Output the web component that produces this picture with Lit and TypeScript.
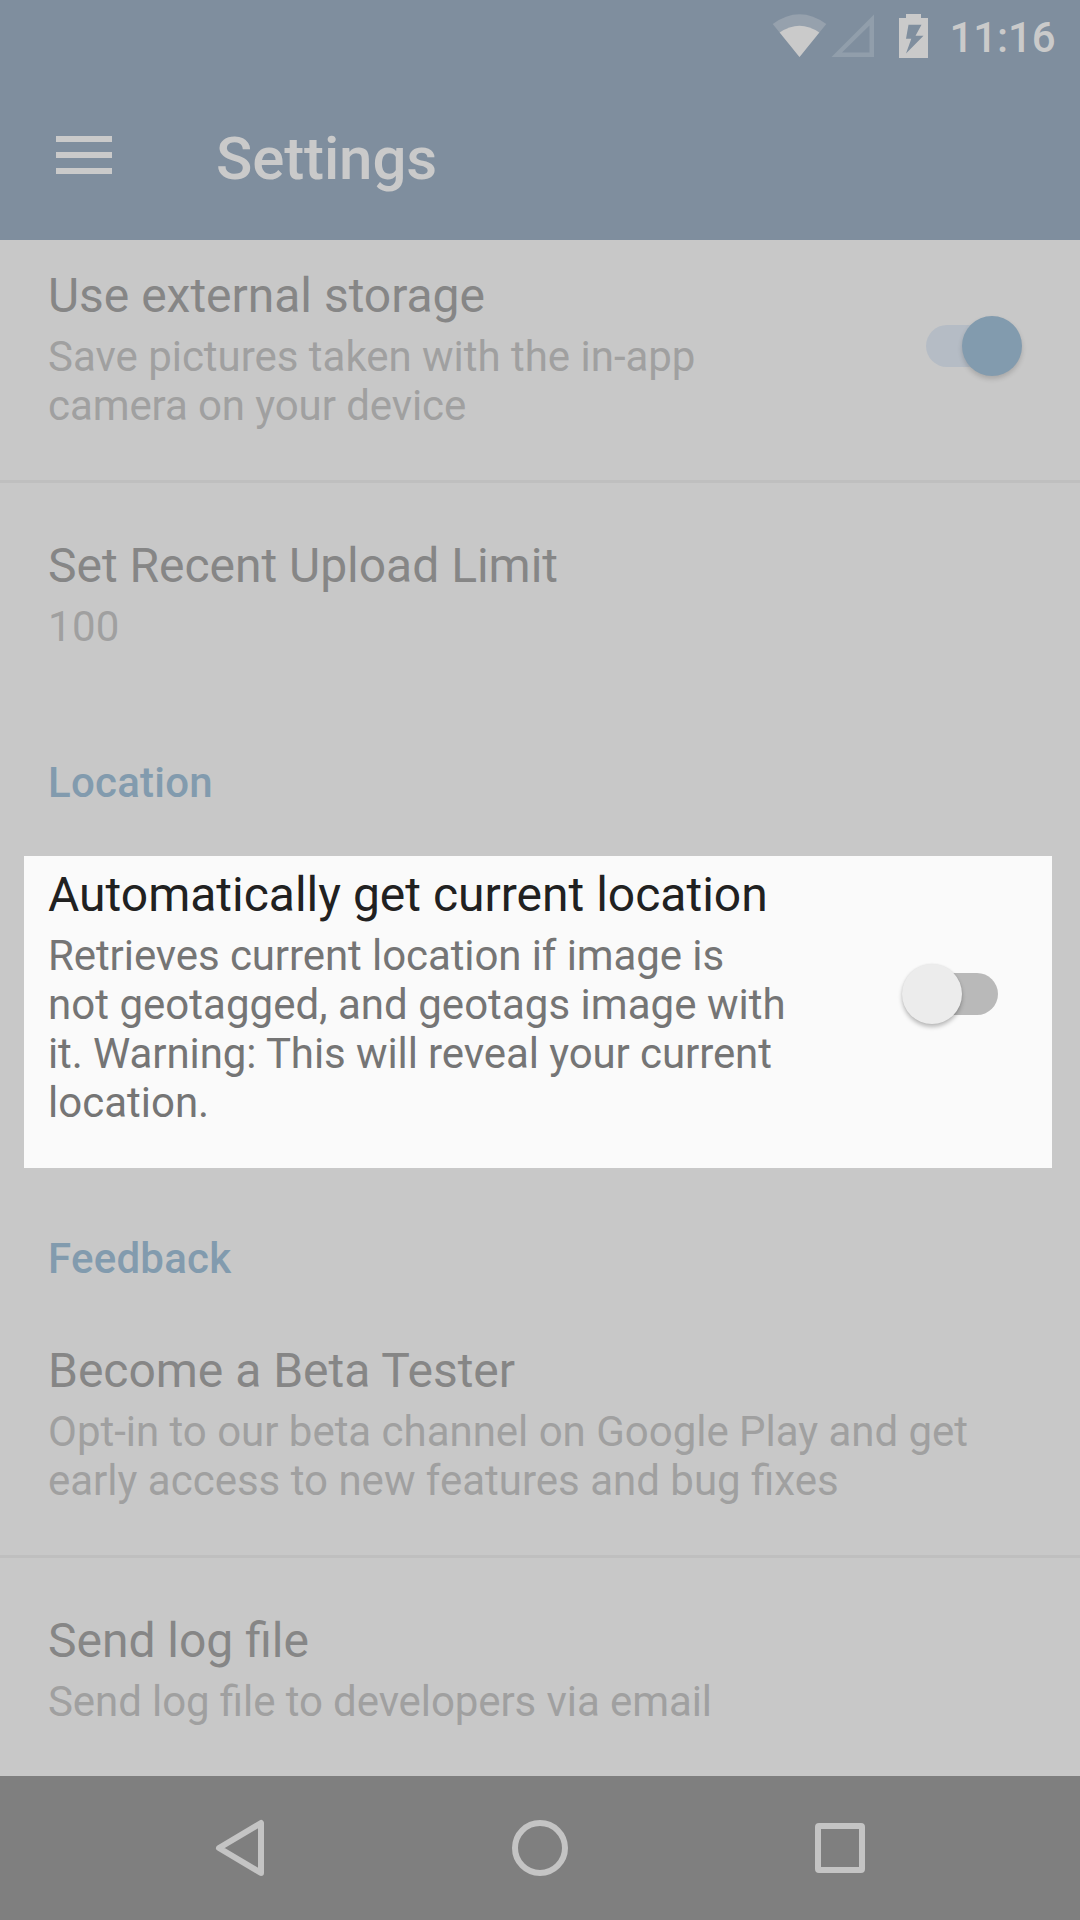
import { LitElement, html, css } from "lit";
import { customElement, property } from "lit/decorators.js";

@customElement("status-bar")
class StatusBar extends LitElement {
  static styles = css`
    :host { display: block; height: 72px; }
    .icons { display: block; width: 1080px; height: 72px; }
    .time { font: 500 42px Roboto, sans-serif; fill: #cacaca; }
  `;
  render() {
    return html`<svg class="icons" viewBox="0 0 1080 72">
      <path d="M799.5 57L772.7 24Q799.5 4.500 826.300 24Z" fill="#96a1ad" />
      <path d="M799.5 57L779.7 32.500Q799.500 19 819.300 32.500Z" fill="#cacaca" />
      <path fill-rule="evenodd" d="M874 14.500V57H831.500ZM869.500 25.500L842 52.500H869.500Z" fill="#919eab" />
      <path fill-rule="evenodd" d="M906 14H921V18H928V58H899V18H906ZM908.500 24.800L906 38.800H911.300L906 53.500L923.500 35.700H915.500L921.500 24.800Z" fill="#cacaca" />
      <text class="time" x="949.5" y="52" textLength="106">11:16</text>
    </svg>`;
  }
}

@customElement("toggle-switch")
class ToggleSwitch extends LitElement {
  @property({ type: Boolean, reflect: true }) on = false;
  static styles = css`
    :host { display: flex; align-items: center; width: 96px; height: 60px; }
    .track { display: flex; align-items: center; width: 84px; height: 42px; border-radius: 21px; background: #b9b9b9; margin-left: 12px; }
    .thumb { flex: none; width: 60px; height: 60px; border-radius: 50%; background: #ececec; margin-left: -12px; box-shadow: 0 3px 4px rgba(0,0,0,.25), 0 0 2px rgba(0,0,0,.08); }
    :host([on]) .track { margin: 0; justify-content: flex-end; background: #b5bcc5; }
    :host([on]) .thumb { margin: 0 -12px 0 0; background: #829bae; box-shadow: 0 3px 5px rgba(0,0,0,.16); }
  `;
  render() { return html`<div class="track"><div class="thumb"></div></div>`; }
}

@customElement("app-root")
class AppRoot extends LitElement {
  static styles = css`
    :host { display: block; width: 1080px; height: 1920px; overflow: hidden; background: #c8c8c8; font-family: Roboto, sans-serif; font-feature-settings: "liga" 1; }
    .page { display: flex; flex-direction: column; height: 1920px; }
    .header { height: 240px; background: #7f8e9e; flex: none; }
    .bar { display: flex; align-items: center; height: 168px; padding-left: 56px; gap: 104px; }
    .menu { width: 56px; height: 40px; fill: #cacaca; }
    .heading { font-size: 60px; font-weight: 500; color: #cacaca; line-height: 70px; padding-top: 6px; letter-spacing: -0.12px; }
    .list { flex: 1; }
    .item { box-sizing: border-box; padding: 26px 48px 0; color: #868686; }
    .title { font-size: 48px; line-height: 60px; white-space: nowrap; letter-spacing: -0.02px; }
    .desc { font-size: 42px; line-height: 49px; color: #a0a0a0; white-space: nowrap; margin-top: 6px; }
    .line { display: block; }
    .tight { letter-spacing: -0.09px; }
    .snug { letter-spacing: -0.02px; }
    .loose { letter-spacing: 0.03px; }
    .number { letter-spacing: 0.3px; }
    .external { display: flex; justify-content: space-between; height: 243px; border-bottom: 3px solid #bfbfbf; }
    .external toggle-switch { margin-top: 50px; margin-right: 10px; }
    .limit { height: 256px; padding-top: 53px; }
    .category { font-size: 42px; font-weight: 500; line-height: 50px; color: #829bae; padding-left: 48px; letter-spacing: 0.25px; }
    .location { height: 98px; padding-top: 19px; }
    .focus { display: flex; justify-content: space-between; height: 312px; margin: 0 28px 0 24px; padding: 9px 54px 0 24px; background: #fafafa; color: #212121; }
    .focus .title { letter-spacing: 0; }
    .focus .desc { color: #757575; }
    .focus toggle-switch { margin-top: 99px; }
    .feedback { height: 106px; padding-top: 66px; }
    .beta { height: 218px; padding-top: 1px; border-bottom: 3px solid #bfbfbf; }
    .log { padding-top: 53px; }
    .nav { flex: none; height: 144px; background: #7f7f7f; }
    .nav svg { display: block; }
  `;
  render() {
    return html`<div class="page">
      <header class="header"><status-bar></status-bar>
        <div class="bar"><svg class="menu" viewBox="0 0 56 40"><path d="M0 0H56V6H0ZM0 16H56V22H0ZM0 32H56V38H0Z" /></svg><div class="heading">Settings</div></div>
      </header>
      <main class="list">
        <section class="item external"><div><div class="title">Use external storage</div><div class="desc"><span class="line snug">Save pictures taken with the in-app</span><span class="line tight">camera on your device</span></div></div><toggle-switch on></toggle-switch></section>
        <section class="item limit"><div class="title">Set Recent Upload Limit</div><div class="desc number">100</div></section>
        <div class="category location">Location</div>
        <section class="item focus"><div><div class="title">Automatically get current location</div><div class="desc"><span class="line tight">Retrieves current location if image is</span><span class="line loose">not geotagged, and geotags image with</span><span class="line tight">it. Warning: This will reveal your current</span><span class="line">location.</span></div></div><toggle-switch></toggle-switch></section>
        <div class="category feedback">Feedback</div>
        <section class="item beta"><div class="title">Become a Beta Tester</div><div class="desc"><span class="line snug">Opt-in to our beta channel on Google Play and get</span><span class="line">early access to new features and bug fixes</span></div></section>
        <section class="item log"><div class="title">Send log file</div><div class="desc tight">Send log file to developers via email</div></section>
      </main>
      <nav class="nav"><svg width="1080" height="144" fill="none" stroke="#c4c4c4" stroke-width="6" stroke-linejoin="round">
        <path d="M261 47V97L219 72Z" /><circle cx="540" cy="72" r="25" /><rect x="818" y="50" width="44" height="44" rx="1" />
      </svg></nav>
    </div>`;
  }
}
